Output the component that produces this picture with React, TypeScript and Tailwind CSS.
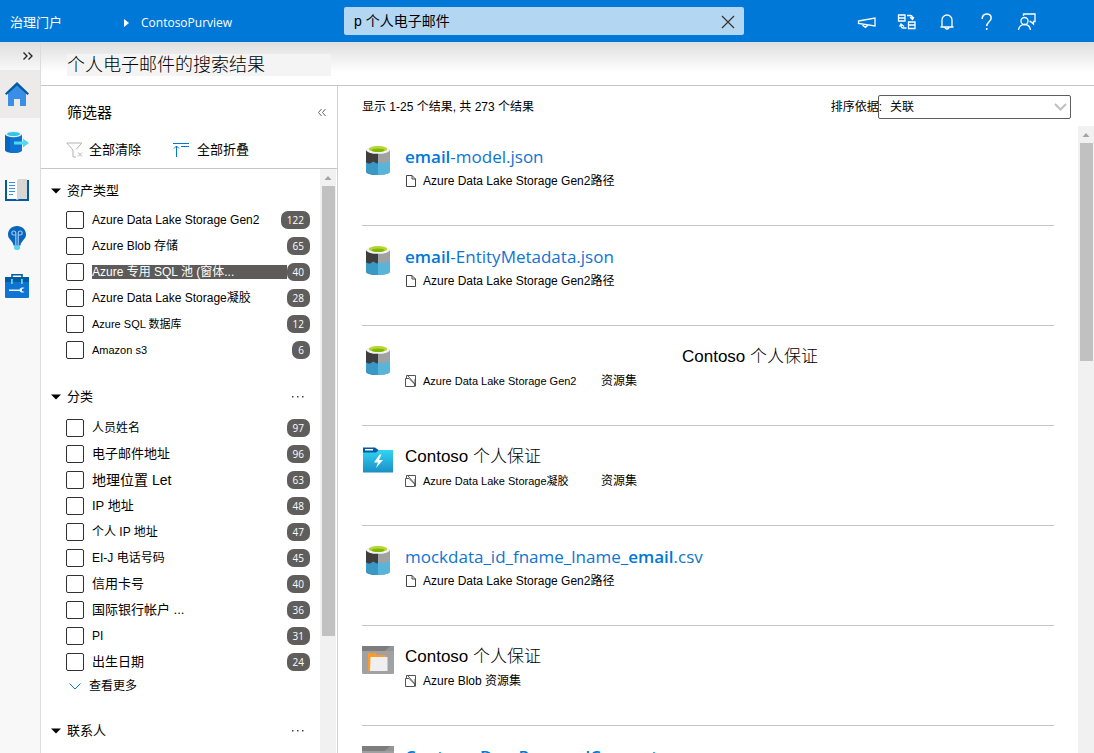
import React from 'react';

type Title = { text: string; bold?: boolean }[];
type Result = {
  icon: 'lake' | 'folder' | 'blob';
  title: Title;
  plain?: boolean;
  shifted?: boolean;
  meta: 'file' | 'set';
  source: string;
  kind?: string;
};
type Filter = { label: string; count?: number; size?: string; highlighted?: boolean };

const assetTypes: Filter[] = [
  { label: 'Azure Data Lake Storage Gen2', count: 122 },
  { label: 'Azure Blob 存储', count: 65 },
  { label: 'Azure 专用 SQL 池 (窗体...', count: 40, highlighted: true },
  { label: 'Azure Data Lake Storage凝胶', count: 28 },
  { label: 'Azure SQL 数据库', count: 12, size: 'text-[11px]' },
  { label: 'Amazon s3', count: 6, size: 'text-[11px]' },
];

const classifications: Filter[] = [
  { label: '人员姓名', count: 97 },
  { label: '电子邮件地址', count: 96, size: 'text-[13px]' },
  { label: '地理位置 Let', count: 63, size: 'text-[14px]' },
  { label: 'IP 地址', count: 48, size: 'text-[13px]' },
  { label: '个人 IP 地址', count: 47, size: 'text-[12px]' },
  { label: 'EI-J 电话号码', count: 45 },
  { label: '信用卡号', count: 40, size: 'text-[13px]' },
  { label: '国际银行帐户 ...', count: 36, size: 'text-[13px]' },
  { label: 'PI', count: 31 },
  { label: '出生日期', count: 24, size: 'text-[13px]' },
];

const contacts: Filter[] = [{ label: '' }];

const results: Result[] = [
  { icon: 'lake', title: [{ text: 'email', bold: true }, { text: '-model.json' }], meta: 'file', source: 'Azure Data Lake Storage Gen2路径' },
  { icon: 'lake', title: [{ text: 'email', bold: true }, { text: '-EntityMetadata.json' }], meta: 'file', source: 'Azure Data Lake Storage Gen2路径' },
  { icon: 'lake', title: [{ text: 'Contoso 个人保证' }], plain: true, shifted: true, meta: 'set', source: 'Azure Data Lake Storage Gen2', kind: '资源集' },
  { icon: 'folder', title: [{ text: 'Contoso 个人保证' }], plain: true, meta: 'set', source: 'Azure Data Lake Storage凝胶', kind: '资源集' },
  { icon: 'lake', title: [{ text: 'mockdata_id_fname_lname_' }, { text: 'email', bold: true }, { text: '.csv' }], meta: 'file', source: 'Azure Data Lake Storage Gen2路径' },
  { icon: 'blob', title: [{ text: 'Contoso 个人保证' }], plain: true, meta: 'set', source: 'Azure Blob 资源集' },
  { icon: 'blob', title: [{ text: 'Contoso_Dev_PersonalConsent', bold: true }], meta: 'set', source: 'Azure Blob 资源集' },
];

const LakeIcon = () => (
  <svg width="32" height="32" viewBox="0 0 32 32" aria-hidden="true">
    <path d="M4 5v21.500c0 2 5.400 3.500 12 3.500V7Z" fill="#3e3e3e" />
    <path d="M28 5v21.500c0 2-5.400 3.500-12 3.500V7Z" fill="#a0a1a2" />
    <path d="M4 17.500l3.500 1.300 4-2.200 3 2 1.500-.6v12c-6.600 0-12-1.500-12-3.500Z" fill="#3999c6" />
    <path d="M28 16.800l-3-.5-3.500 2.800-2.500-2L16 18v12c6.600 0 12-1.500 12-3.500Z" fill="#59b4d9" />
    <ellipse cx="16" cy="4.800" rx="12" ry="4" fill="#f4f4f4" />
    <ellipse cx="16" cy="4" rx="9.300" ry="3" fill="#b8d432" />
    <ellipse cx="16" cy="5.200" rx="6.500" ry="1.700" fill="#7fba00" />
  </svg>
);

const FolderIcon = () => (
  <svg width="32" height="32" viewBox="0 0 32 32" aria-hidden="true">
    <defs>
      <linearGradient id="folderFill" x1="0" y1="0" x2="0" y2="1">
        <stop offset="0" stopColor="#32d4f5" />
        <stop offset="1" stopColor="#1a8fc4" />
      </linearGradient>
    </defs>
    <path d="M1 2.500h12l4 3-3 3H1Z" fill="#005ba1" />
    <path d="M1 7.500h13l3-2.500h14v22.500H1Z" fill="url(#folderFill)" />
    <rect x="3" y="4" width="8" height="1.500" fill="#fff" />
    <path d="M17.500 9.500 12 17.500h4L14 23l7-8h-4l2.500-5.500Z" fill="#fff" />
  </svg>
);

const BlobIcon = () => (
  <svg width="32" height="32" viewBox="0 0 32 32" aria-hidden="true">
    <rect x="0" y="1" width="32" height="28" rx="1" fill="#a0a1a2" />
    <path d="M0 1h32v5H0Z" fill="#7d7d7d" />
    <path d="M28 1h4v5h-9Z" fill="#949494" />
    <path d="M6 8h7l2 2h9v16H6Z" fill="#ff9a28" />
    <path d="M8.500 12h17v14H8Z" fill="#efefef" />
  </svg>
);

const FileIcon = () => (
  <svg width="12" height="12" viewBox="0 0 12 12" fill="none" stroke="#444" aria-hidden="true">
    <path d="M1.500.5H7L10.500 4v7.500h-9ZM7 .5V4h3.500" />
  </svg>
);

const SetIcon = () => (
  <svg width="12" height="12" viewBox="0 0 12 12" fill="none" stroke="#555" aria-hidden="true">
    <path d="M.5 3.500H4L9.500 9v2.500h-9ZM1.500 3V.5h9v11M3 1l7 8V4" />
  </svg>
);

const resultIcons = { lake: LakeIcon, folder: FolderIcon, blob: BlobIcon };

function ScrollTrack({ thumb }: { thumb: string }) {
  return (
    <div className="flex w-4 shrink-0 flex-col items-center bg-[#f1f1f1]" aria-hidden="true">
      <svg className="shrink-0" width="16" height="17" viewBox="0 0 16 17">
        <path d="M4.500 11 8 7l3.500 4Z" fill="#a3a3a3" />
      </svg>
      <div className={`w-[13px] shrink-0 bg-[#c1c1c1] ${thumb}`} />
    </div>
  );
}

function FilterSection({ title, items, menu, more, prefix }: { title: string; items: Filter[]; menu?: boolean; more?: boolean; prefix: string }) {
  return (
    <section>
      <div className="flex h-8 items-center pl-[10px] pr-[14px]">
        <button className="flex items-center gap-[6px] text-[13px]">
          <svg width="10" height="6" viewBox="0 0 10 6" aria-hidden="true">
            <path d="M0 .5h10L5 5.500Z" fill="#000" />
          </svg>
          <h3>{title}</h3>
        </button>
        {menu && (
          <button className="ml-auto" aria-label={`${title} 选项`}>
            <svg width="16" height="4" viewBox="0 0 16 4" fill="#444" aria-hidden="true">
              <path d="M2 1h1.500v1.500H2ZM7 1h1.500v1.500H7ZM12 1h1.500v1.500H12Z" />
            </svg>
          </button>
        )}
      </div>
      <ul className={menu ? 'pt-[2px]' : ''}>
        {items.map((item, i) => (
          <li key={item.label} className="flex h-[26px] items-center pl-[25px] pr-[10px]">
            <input
              id={`${prefix}${i}`}
              type="checkbox"
              aria-label={item.label || title}
              className="mr-2 size-[18px] shrink-0 appearance-none rounded-[2px] border border-[#323130] bg-white checked:bg-[#0078d4]"
            />
            <label
              htmlFor={`${prefix}${i}`}
              className={`grow whitespace-nowrap ${item.size ?? 'text-[12px]'} ${item.highlighted ? 'bg-[#5d5b59] leading-[14px] text-white' : 'leading-[18px]'}`}
            >
              {item.label}
            </label>
            <span className="flex h-[18px] min-w-[18px] shrink-0 items-center justify-center rounded-[7px] bg-[#605e5c] px-[6px] font-['Open_Sans'] text-[10px] font-medium text-white">
              {item.count}
            </span>
          </li>
        ))}
      </ul>
      {more && (
        <button className="flex h-[22px] items-center gap-2 pl-7 text-[12px]">
          <svg width="12" height="7" viewBox="0 0 12 7" fill="none" stroke="#0078d4" aria-hidden="true">
            <path d="M.5.500 6 6 11.500.500" />
          </svg>
          查看更多
        </button>
      )}
    </section>
  );
}

export default function App() {
  return (
    <div className="flex h-screen flex-col overflow-hidden bg-white font-['Liberation_Sans','Noto_Sans_CJK_SC',sans-serif] text-[12px] text-black">
      <header className="flex h-[42px] shrink-0 items-center bg-[#0078d7] text-white">
        <div className="flex w-[344px] shrink-0 items-center pl-[10px] pt-1">
          <a href="#" className="w-[114px] text-[13px]">治理门户</a>
          <svg width="5" height="8" viewBox="0 0 5 8" aria-hidden="true">
            <path d="M0 0l5 4-5 4Z" fill="#fff" />
          </svg>
          <a href="#" className="ml-3 font-['Open_Sans'] text-[12px] font-medium">ContosoPurview</a>
        </div>
        <div className="flex h-7 w-[400px] shrink-0 items-center rounded-[2px] bg-[#b3d6f2] pl-[10px] pr-[9px]">
          <input aria-label="搜索" defaultValue="p 个人电子邮件" className="min-w-0 grow bg-transparent text-[14px] text-black outline-none" />
          <button aria-label="清除搜索" className="pt-[2px]">
            <svg width="14" height="14" viewBox="0 0 14 14" stroke="#333" strokeWidth="1.200" aria-hidden="true">
              <path d="M1 1l12 12M13 1 1 13" />
            </svg>
          </button>
        </div>
        <nav className="ml-auto flex items-center gap-5 pr-[57px] pt-[2px]" aria-label="工具">
          <button aria-label="公告">
            <svg width="20" height="20" viewBox="0 0 20 20" fill="none" stroke="#fff" strokeWidth="1.300" aria-hidden="true">
              <path d="M1.500 9 18 6v8L1.500 11.500Zm4 3 .5 1.500 2.500 1.800 2.500-2.300" />
            </svg>
          </button>
          <button aria-label="切换">
            <svg width="20" height="20" viewBox="0 0 20 20" fill="none" stroke="#fff" strokeWidth="1.300" aria-hidden="true">
              <path d="M1.500 3h6.500v6h-6.500ZM1.500 6h6.500M11.500 10h6.500v6.500h-6.500ZM11.500 13h6.500M10 3.500h3.500c1.500 0 2 .5 2 3M13 5l2.500 2.500L17 5M9.500 16H6c-1.500 0-2-1-2-3M2.500 14.500 4 12l3 2.500" />
            </svg>
          </button>
          <button aria-label="通知">
            <svg width="20" height="20" viewBox="0 0 20 20" fill="none" stroke="#fff" strokeWidth="1.300" aria-hidden="true">
              <path d="M5 15V8a5 5 0 0 1 10 0v7M3.500 15h13M8 15.500c.5 2 3.500 2 4 0" />
            </svg>
          </button>
          <button aria-label="帮助">
            <svg width="20" height="20" viewBox="0 0 20 20" fill="none" stroke="#fff" strokeWidth="1.500" aria-hidden="true">
              <path d="M5.200 7c0-6.500 9-6.500 9-1 0 3.500-4.500 4-4.500 8M9.700 16v2" />
            </svg>
          </button>
          <button aria-label="反馈">
            <svg width="20" height="20" viewBox="0 0 20 20" fill="none" stroke="#fff" strokeWidth="1.300" aria-hidden="true">
              <circle cx="7.500" cy="9" r="3.500" />
              <path d="M1.500 18c.3-3.500 3-5.500 6-5.500s5.500 2 6 5.500M6.500 4V2h11.500v7.500h-1.500V12l-3-2.500h-1" />
            </svg>
          </button>
        </nav>
      </header>

      <div className="flex min-h-0 grow">
        <nav className="flex w-[41px] shrink-0 flex-col border-r border-[#dcdcdc] bg-[#f8f8f8]" aria-label="主导航">
          <button className="flex h-7 shrink-0 items-center justify-end bg-linear-to-b from-[#dedede] to-[#f8f8f8] pr-[7px]" aria-label="展开">
            <svg width="10" height="8" viewBox="0 0 10 8" fill="none" stroke="#222" strokeWidth="1.300" aria-hidden="true">
              <path d="M.5.500 4 4 .5 7.500M5.500.500 9 4 5.500 7.500" />
            </svg>
          </button>
          <a href="#" aria-label="主页" className="flex h-12 shrink-0 items-center bg-[#edebe9] pl-[5px]">
            <svg width="24" height="24" viewBox="0 0 24 24" aria-hidden="true">
              <path d="M12 2 3 10.500V24h6v-7h6v7h6V10.500Z" fill="#3b8ee8" />
              <path d="M12 0 0 11.500l1.500 1.500L12 3.500 22.500 13l1.500-1.500Z" fill="#005ba1" />
            </svg>
          </a>
          <a href="#" aria-label="数据源" className="flex h-12 shrink-0 items-center pl-[5px]">
            <svg width="24" height="24" viewBox="0 0 24 24" aria-hidden="true">
              <path d="M0 4v16c0 4 17 4 17 0V4Z" fill="#0a66bd" />
              <path d="M5 4v18.800c6 .6 12-.3 12-2.800V4Z" fill="#0f74d1" />
              <ellipse cx="8.500" cy="4" rx="8.500" ry="3.200" fill="#e6f4fb" />
              <ellipse cx="8.500" cy="4" rx="6.500" ry="2" fill="#35c3e6" />
              <path d="M9 11.500h9V8.500l6 4.500-6 4.500v-3H9Z" fill="#50d9f2" />
            </svg>
          </a>
          <a href="#" aria-label="目录" className="flex h-12 shrink-0 items-center pl-[5px]">
            <svg width="24" height="24" viewBox="0 0 24 24" aria-hidden="true">
              <path d="M0 2h24v21H0Z" fill="#005ba1" />
              <path d="M2 1h9l1 1v20l-1-1H2Z" fill="#fff" />
              <path d="M12 2l2-1h8v20h-8l-2 1Z" fill="#d8d6d4" />
              <path d="M4 4.500h6M4 7.500h6M4 10.500h6M4 13.500h6M4 16.500h4" stroke="#3b8ee8" strokeWidth="1.200" />
            </svg>
          </a>
          <a href="#" aria-label="见解" className="flex h-12 shrink-0 items-center pl-[5px]">
            <svg width="24" height="24" viewBox="0 0 24 24" aria-hidden="true">
              <path d="M12 0C6.500 0 3 4 3 8.500c0 5 5 6 5.500 11h7c.5-5 5.500-6 5.500-11C21 4 17.500 0 12 0Z" fill="#0a66bd" />
              <path d="M9 20h6v2.500L13.500 24h-3L9 22.500Z" fill="#50d9f2" />
              <path d="M10.800 19V9M13.200 19V9M10.800 9H8.500a2 2 0 1 1 2.300-2Zm2.400 0h2.300a2 2 0 1 0-2.300-2Z" stroke="#9cc8f0" fill="none" strokeWidth="1.200" />
            </svg>
          </a>
          <a href="#" aria-label="管理" className="flex h-12 shrink-0 items-center pl-[5px]">
            <svg width="24" height="24" viewBox="0 0 24 24" aria-hidden="true">
              <path d="M7 3V.800h10V3" fill="none" stroke="#005ba1" strokeWidth="1.600" />
              <rect y="3" width="24" height="21" rx="1" fill="#0f74d1" />
              <path d="M0 3h24v5H0Z" fill="#005ba1" />
              <path d="M6 5h1.800v5H6ZM16 5h1.800v5H16Z" fill="#50d9f2" />
              <path d="M4 15.500h10.500c1-2 3-2.500 5-1.500l-2.500 1v2l2.500 1c-2 1-4 .5-5-1H4Z" fill="#e8f2fb" />
            </svg>
          </a>
        </nav>

        <div className="flex min-w-0 grow flex-col">
          <div className="h-11 shrink-0 border-b border-[#c8c6c4] bg-linear-to-b from-[#dedede] to-white to-70% pl-[26px] pt-3">
            <h1 className="h-[22px] w-[264px] bg-[#f4f4f4] text-[18px] font-light leading-[22px]">个人电子邮件的搜索结果</h1>
          </div>

          <div className="flex min-h-0 grow">
            <aside className="flex w-[297px] shrink-0 flex-col border-r border-[#d2d0ce]">
              <div className="shrink-0 border-b border-[#c8c6c4]">
                <div className="flex h-[46px] items-end justify-between pb-2 pl-[26px] pr-[11px]">
                  <h2 className="text-[15px]">筛选器</h2>
                  <button aria-label="收起筛选器" className="pb-2">
                    <svg width="8" height="7" viewBox="0 0 8 7" fill="none" stroke="#666" aria-hidden="true">
                      <path d="M3.500 0 .5 3.500l3 3.500M7.500 0l-3 3.500 3 3.500" />
                    </svg>
                  </button>
                </div>
                <div className="flex h-9 items-center gap-8 pl-[25px] text-[13px]">
                  <button className="flex items-center gap-[6px]">
                    <svg width="17" height="16" viewBox="0 0 17 16" fill="none" stroke="#b5b3b1" aria-hidden="true">
                      <path d="M10 15H7V8L.8 1h15L10 7.500M12 10.500l4 4M16 10.500l-4 4" />
                    </svg>
                    全部清除
                  </button>
                  <button className="flex items-center gap-2">
                    <svg width="16" height="16" viewBox="0 0 16 16" fill="none" stroke="#0078d4" aria-hidden="true">
                      <path d="M0 1.500h16M8 4.500h8M3.500 15V4M1 6.500 3.500 4 6 6.500" />
                    </svg>
                    全部折叠
                  </button>
                </div>
              </div>
              <div className="flex min-h-0 grow pr-px">
                <div className="flex min-w-0 grow flex-col gap-[18px] overflow-hidden pt-[6px]">
                  <FilterSection title="资产类型" items={assetTypes} prefix="asset" />
                  <FilterSection title="分类" items={classifications} prefix="class" menu more />
                  <FilterSection title="联系人" items={contacts} prefix="contact" menu />
                </div>
                <ScrollTrack thumb="h-[450px]" />
              </div>
            </aside>

            <main className="flex min-w-0 grow flex-col">
              <div className="flex h-10 shrink-0 items-center justify-between pl-6 pr-[23px] pt-[2px]">
                <p>显示 1-25 个结果, 共 273 个结果</p>
                <div className="flex items-center">
                  <label htmlFor="sort" className="-mr-1">排序依据:</label>
                  <div className="grid items-center">
                    <select id="sort" className="col-start-1 row-start-1 h-6 w-[193px] appearance-none rounded-[2px] border border-[#605e5c] bg-transparent pl-[11px] text-[12px]">
                      <option>关联</option>
                    </select>
                    <svg className="pointer-events-none col-start-1 row-start-1 mr-1 justify-self-end" width="13" height="8" viewBox="0 0 13 8" fill="none" stroke="#c0c0c0" strokeWidth="2" aria-hidden="true">
                      <path d="M1 1l5.500 5.500L12 1" />
                    </svg>
                  </div>
                </div>
              </div>
              <div className="flex min-h-0 grow">
                <ul className="min-w-0 grow overflow-hidden px-6">
                  {results.map((r, i) => {
                    const Icon = resultIcons[r.icon];
                    return (
                      <li key={i} className="flex h-[100px] gap-[11px] border-b border-[#c8c6c4] pt-[19px]">
                        <div className="shrink-0"><Icon /></div>
                        <div className="min-w-0 grow">
                          <a
                            href="#"
                            className={
                              r.plain
                                ? `block w-fit text-[17px] font-light leading-6 ${r.shifted ? 'ml-[277px]' : ''}`
                                : "block w-fit font-['Open_Sans'] text-[17px] font-medium leading-6 text-[#0f74d1]"
                            }
                          >
                            {r.title.map((t) => (
                              <span key={t.text} className={t.bold ? 'font-semibold text-[#0078d7]' : ''}>{t.text}</span>
                            ))}
                          </a>
                          <div className="flex h-6 items-center text-[12px]">
                            {r.meta === 'file' ? <FileIcon /> : <SetIcon />}
                            <span className={r.kind ? 'ml-[6px] w-[178px] text-[11px]' : 'ml-[6px]'}>{r.source}</span>
                            {r.kind && <span>{r.kind}</span>}
                          </div>
                        </div>
                      </li>
                    );
                  })}
                </ul>
                <ScrollTrack thumb="h-[218px]" />
              </div>
            </main>
          </div>
        </div>
      </div>
    </div>
  );
}
